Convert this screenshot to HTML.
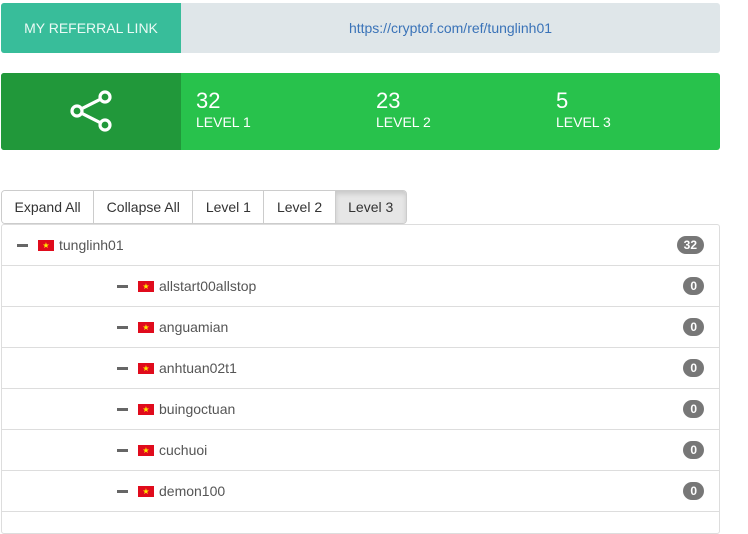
<!DOCTYPE html>
<html><head><style>
body{margin:0;width:748px;height:518px;overflow:hidden;background:#fff;font-family:"Liberation Sans",sans-serif;font-size:14px;color:#333;position:relative}
.a{position:absolute}
.ref{left:1px;top:3px;width:719px;height:50px;border-radius:3px;overflow:hidden;background:#dfe6e9}
.ref .l{left:0;top:0;width:180px;height:50px;background:#38bd9a;color:#eafaf5;line-height:50px;text-align:center;font-size:14px}
.ref .u{left:180px;top:0;width:539px;line-height:50px;text-align:center;color:#3a73b8;font-size:14px}
.st{left:1px;top:73px;width:719px;height:77px;border-radius:3px;overflow:hidden;background:#28c24c}
.st .ic{left:0;top:0;width:180px;height:77px;background:#21983a}
.n{color:#fff}
.n b{display:block;font-weight:normal;font-size:22px;line-height:26px}
.n span{font-size:14px}
.btns{left:1px;top:190px;height:34px;display:flex;border:1px solid #ccc;border-radius:4px;overflow:hidden;box-sizing:border-box}
.btns div{padding:0 12.5px;line-height:32px;border-right:1px solid #ccc;font-size:14px;color:#333;background:#fff}
.btns div:last-child{border-right:0;background:#e6e6e6;box-shadow:inset 0 3px 5px rgba(0,0,0,.125)}
.panel{left:1px;top:224px;width:719px;height:310px;border:1px solid #ddd;box-sizing:border-box;border-radius:3px}
.row{position:absolute;left:0;width:717px;height:41px;border-bottom:1px solid #ddd;box-sizing:border-box}
.row .m{position:absolute;top:19px;width:11px;height:3px;background:#666}
.row .f{position:absolute;top:15px;width:16px;height:11px;background:#e00b1c;color:#ffeb00;font-size:8px;line-height:11px;text-align:center}
.row .t{position:absolute;top:12px;color:#555;font-size:14px}
.row .b{position:absolute;right:15px;top:11px;background:#777;color:#fff;font-size:12px;font-weight:bold;border-radius:9px;height:18px;line-height:18px;padding:0 7px}
</style></head><body>
<div class="a ref"><div class="a l">MY REFERRAL LINK</div><div class="a u">https://cryptof.com/ref/tunglinh01</div></div>
<div class="a st"><div class="a ic">
<svg class="a" style="left:68px;top:16px" width="46" height="46" viewBox="0 0 46 46" fill="none" stroke="#fff" stroke-width="3.2"><circle cx="36" cy="8" r="5"/><circle cx="8" cy="22" r="5"/><circle cx="36" cy="36" r="5"/><path d="M12.5 19.8L31.5 10.2M12.5 24.2L31.5 33.8"/></svg>
</div>
<div class="a n" style="left:195px;top:15px"><b>32</b><span>LEVEL 1</span></div>
<div class="a n" style="left:375px;top:15px"><b>23</b><span>LEVEL 2</span></div>
<div class="a n" style="left:555px;top:15px"><b>5</b><span>LEVEL 3</span></div>
</div>
<div class="a btns"><div>Expand All</div><div>Collapse All</div><div>Level 1</div><div>Level 2</div><div>Level 3</div></div>
<div class="a panel">
<div class="row" style="top:0"><div class="m" style="left:15px"></div><div class="f" style="left:36px">★</div><div class="t" style="left:57px">tunglinh01</div><div class="b">32</div></div>
<div class="row" style="top:41px"><div class="m" style="left:115px"></div><div class="f" style="left:136px">★</div><div class="t" style="left:157px">allstart00allstop</div><div class="b">0</div></div>
<div class="row" style="top:82px"><div class="m" style="left:115px"></div><div class="f" style="left:136px">★</div><div class="t" style="left:157px">anguamian</div><div class="b">0</div></div>
<div class="row" style="top:123px"><div class="m" style="left:115px"></div><div class="f" style="left:136px">★</div><div class="t" style="left:157px">anhtuan02t1</div><div class="b">0</div></div>
<div class="row" style="top:164px"><div class="m" style="left:115px"></div><div class="f" style="left:136px">★</div><div class="t" style="left:157px">buingoctuan</div><div class="b">0</div></div>
<div class="row" style="top:205px"><div class="m" style="left:115px"></div><div class="f" style="left:136px">★</div><div class="t" style="left:157px">cuchuoi</div><div class="b">0</div></div>
<div class="row" style="top:246px"><div class="m" style="left:115px"></div><div class="f" style="left:136px">★</div><div class="t" style="left:157px">demon100</div><div class="b">0</div></div>
</div>
</body></html>
